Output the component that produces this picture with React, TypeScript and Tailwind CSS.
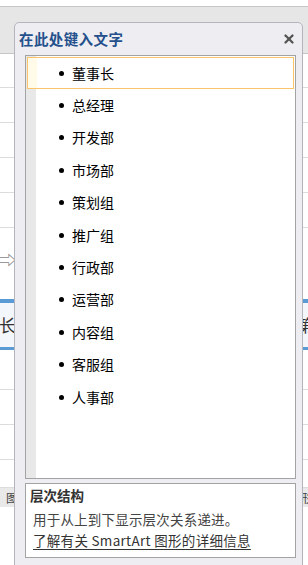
import { X } from "lucide-react"

const items = [
  "董事长",
  "总经理",
  "开发部",
  "市场部",
  "策划组",
  "推广组",
  "行政部",
  "运营部",
  "内容组",
  "客服组",
  "人事部",
]

const cjk = "font-['Microsoft_YaHei','Noto_Sans_CJK_SC',sans-serif]"

export default function App() {
  return (
    <div className={`relative w-[308px] h-[565px] overflow-hidden bg-white ${cjk}`}>
      {/* worksheet behind the pane */}
      <div className="flex flex-col">
        <div className="h-[6px] bg-white" />
        <div className="h-[48px] bg-[#e6e6e6] border-t border-b border-[#c6c6c6]" />
        <div className="h-[34px] border-b border-[#dcdcdc]" />
        <div className="h-[35px] border-b border-[#dcdcdc]" />
        <div className="h-[35px] border-b border-[#dcdcdc]" />
        <div className="h-[35px] border-b border-[#dcdcdc]" />
        <div className="h-[35px] border-b border-[#dcdcdc]" />
        <div className="h-[71px] flex items-start pt-[22px] text-[#888] text-[18px] leading-none">
          <span className="-ml-[2px]">⇨</span>
        </div>
        <div className="h-[4px] bg-[#5b9bd5]" />
        <div className="h-[44px] bg-[#f3f6fa] flex items-center justify-between text-[17px] text-[#333]">
          <span className="-ml-[1px]">长</span>
          <span className="mr-[-6px]">第</span>
        </div>
        <div className="h-[3px] bg-[#5b9bd5]" />
        <div className="h-[40px] border-b border-[#dcdcdc]" />
        <div className="h-[35px] border-b border-[#dcdcdc]" />
        <div className="h-[35px] border-b border-[#dcdcdc]" />
        <div className="h-[28px] border-b border-[#dcdcdc]" />
        <div className="h-[19px] bg-[#e9e9e9] flex items-center justify-between text-[12px] text-[#444]">
          <span className="ml-[6px]">图</span>
          <span className="-mr-[4px]">形</span>
        </div>
      </div>

      {/* text pane */}
      <div className="absolute left-[14px] top-[22px] w-[289px] h-[560px] rounded-t-[5px] border border-[#b4b4bc] bg-[#ededf2] flex flex-col">
        <div className="h-[32px] flex items-center justify-between pl-[4px] pr-[6px]">
          <span className="text-[14.5px] font-semibold tracking-[0.4px] text-[#24508c]">在此处键入文字</span>
          <X className="w-[14px] h-[14px] text-[#555]" strokeWidth={4} />
        </div>

        <div className="ml-[10px] w-[271px] h-[424px] border border-[#a3a3a3] bg-white flex">
          <div className="w-[10px] bg-[#e8e8e8]" />
          <div className="flex-1" />
          <div className="absolute left-[12px] top-[34px] w-[267px] flex flex-col">
            {items.map((item, i) => (
              <div
                key={item}
                className={`h-[32.4px] flex items-center ${
                  i === 0 ? "border border-[#fbc46b] bg-[linear-gradient(90deg,#fffbe8_0,#fffbe8_9px,white_9px)]" : "border border-transparent"
                }`}
              >
                <span className="ml-[31px] w-[5px] h-[5px] rounded-full bg-black" />
                <span className="ml-[8px] text-[14px] text-black">{item}</span>
              </div>
            ))}
          </div>
        </div>

        <div className="ml-[10px] mt-[4px] w-[271px] h-[75px] border border-[#a3a3a3] bg-white flex flex-col pl-[4px] pt-[4px] text-[13.5px] leading-none">
          <span className="font-bold text-[#333] mt-[1px]">层次结构</span>
          <span className="ml-[3px] mt-[10px] text-[#444] tracking-[0.2px]">用于从上到下显示层次关系递进。</span>
          <span className="ml-[3px] mt-[8px] text-[#333] underline underline-offset-[3px] tracking-[0.3px]">了解有关 SmartArt 图形的详细信息</span>
        </div>
      </div>
    </div>
  )
}
